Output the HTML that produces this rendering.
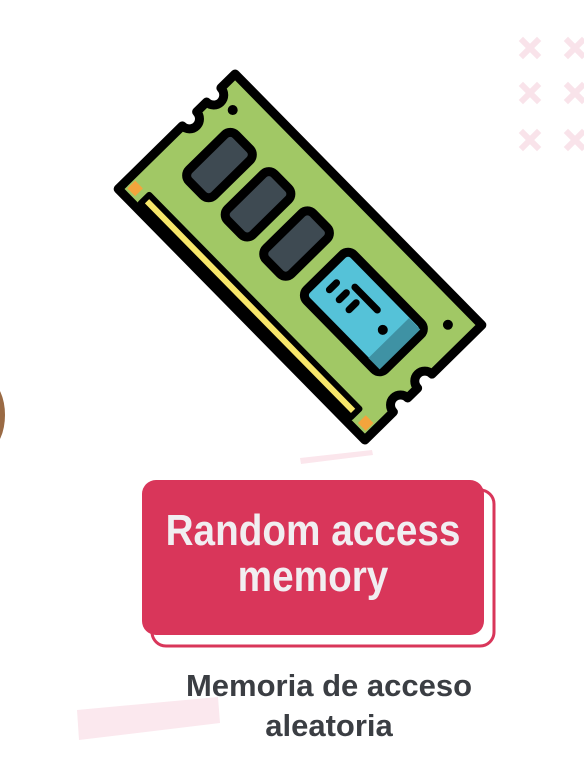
<!DOCTYPE html>
<html><head><meta charset="utf-8"><style>
html,body{margin:0;padding:0;background:#fff;}
body{width:584px;height:784px;position:relative;overflow:hidden;font-family:"Liberation Sans",sans-serif;}
.t{position:absolute;font-weight:bold;white-space:nowrap;text-align:center;}
</style></head><body>
<svg width="584" height="784" style="position:absolute;left:0;top:0">
  <g stroke="#f9e3ea" stroke-width="6" stroke-linecap="square">
    <path d="M523 41l14 14M537 41l-14 14M568 41l14 14M582 41l-14 14"/>
    <path d="M523 86l14 14M537 86l-14 14M568 86l14 14M582 86l-14 14"/>
    <path d="M523 133l14 14M537 133l-14 14M568 133l14 14M582 133l-14 14"/>
  </g>
  <ellipse cx="-10" cy="415" rx="15" ry="32" fill="#9a6a44"/>
  <polygon points="300,458 372,450 373,455 301,464" fill="#fbe6ec"/>
  <polygon points="77,710 218,697 220,723 79,740" fill="#fbe8ee"/>
  <g transform="translate(300,257) rotate(45.5)" stroke-linejoin="round">
    <path d="M-176 -82 L176 -82 L176 -12 A10 10 0 0 0 176 8 L176 22 A10 10 0 0 0 176 42 L176 82 L-176 82 L-176 -8 A10 10 0 0 0 -176 -28 L-176 -42 A10 10 0 0 0 -176 -62 Z" fill="#a1c865" stroke="#000" stroke-width="9"/>
    <rect x="-150" y="64" width="300" height="12" fill="#f7e66a" stroke="#000" stroke-width="6"/>
    <rect x="-170" y="64" width="11" height="11" fill="#f4a43c"/>
    <rect x="159" y="64" width="11" height="11" fill="#f4a43c"/>
    <rect x="-140" y="-40" width="36" height="66" rx="8" fill="#3e4a52" stroke="#000" stroke-width="9"/>
    <rect x="-85" y="-40" width="36" height="66" rx="8" fill="#3e4a52" stroke="#000" stroke-width="9"/>
    <rect x="-30" y="-40" width="36" height="66" rx="8" fill="#3e4a52" stroke="#000" stroke-width="9"/>
    <rect x="28" y="-40" width="112" height="66" rx="8" fill="#55c2d8" stroke="#000" stroke-width="9"/>
    <rect x="120" y="-35" width="16" height="57" fill="#3f92a4"/>
    <path d="M60 -18 L92 -18 M44 -8 v10 M58 -8 v10 M72 -8 v10" stroke="#000" stroke-width="7" stroke-linecap="round"/>
    <circle cx="110" cy="-8" r="5" fill="#000"/>
    <circle cx="-152" cy="-55" r="5" fill="#000"/>
    <circle cx="152" cy="-58" r="5" fill="#000"/>
  </g>
  <rect x="152" y="490" width="342" height="156" rx="14" fill="#fff" stroke="#d9365a" stroke-width="3"/>
  <rect x="142" y="480" width="342" height="155" rx="14" fill="#d9365a"/>
</svg>
<div class="t" style="left:113px;width:400px;top:508px;font-size:44px;line-height:46px;color:#f1eef1;transform:scaleX(0.88);">Random access<br>memory</div>
<div class="t" style="left:129px;width:400px;top:666px;font-size:31px;line-height:40px;color:#3b3e43;transform:scaleX(1.0);">Memoria de acceso<br>aleatoria</div>
</body></html>
